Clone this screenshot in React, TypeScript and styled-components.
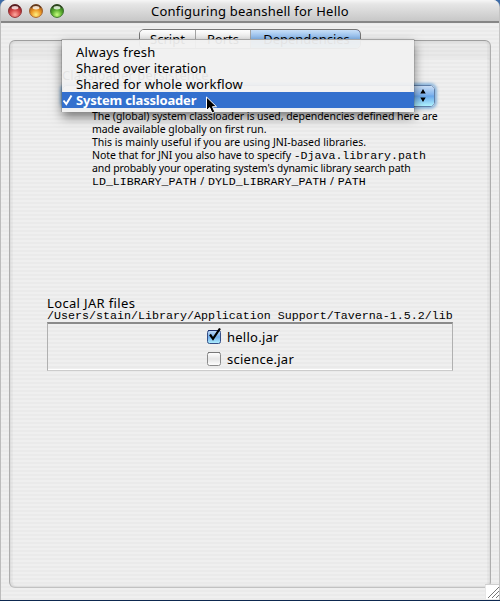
import React from "react";
import styled, { createGlobalStyle, css } from "styled-components";

const GlobalStyle = createGlobalStyle`
  * { box-sizing: border-box; }
  body { margin: 0; overflow: hidden; }
`;

const stripes = css`
  background: repeating-linear-gradient(to bottom, #efefef 0 2px, #eaeaea 2px 4px);
`;

const Desktop = styled.div`
  width: 500px;
  height: 601px;
  background: linear-gradient(to bottom, #3d6ca8 0 580px, #0d2850 580px);
  font-family: "Noto Sans", "Open Sans", sans-serif;
  font-size: 13px;
  color: #000;
  overflow: hidden;
`;

const Window = styled.div`
  position: relative;
  display: flex;
  flex-direction: column;
  height: 600px;
  border-radius: 7px 7px 0 0;
  overflow: hidden;
  ${stripes}
  border-left: 1px solid #bcbcbc;
  border-right: 1px solid #c4c4c4;
`;

const TitleBar = styled.header`
  flex: none;
  display: flex;
  align-items: center;
  height: 23px;
  padding: 0 0 0 8px;
  background: linear-gradient(to bottom, #f6f6f6 0, #e6e6e6 4px, #c7c7c7 21px);
  border-bottom: 2px solid #868686;
  margin: 0 -1px;
`;

const Lights = styled.div`
  display: flex;
  gap: 6px;
`;

const Title = styled.h1`
  flex: 1;
  margin: 0 0 0 86px;
  font-size: 13px;
  font-weight: 400;
  line-height: 20px;
  white-space: nowrap;
`;

const Line = styled.span<{ $ls?: number; $ws?: number }>`
  display: block;
  white-space: pre;
  letter-spacing: ${(p) => p.$ls ?? 0}px;
  word-spacing: ${(p) => p.$ws ?? 0}px;
`;

const Content = styled.main`
  flex: 1;
  display: flex;
  flex-direction: column;
  padding: 6px 8px 12px;
`;

const TabBar = styled.nav`
  position: relative;
  z-index: 1;
  display: flex;
  align-self: flex-start;
  width: 222px;
  height: 20px;
  margin: 0 0 -9px 130px;
  border: 1px solid #777;
  border-radius: 5px;
  overflow: hidden;
`;

const Tab = styled.div<{ $w: number; $active?: boolean }>`
  width: ${(p) => p.$w}px;
  text-align: center;
  line-height: 18px;
  border-right: 1px solid #a4a4a4;
  background: linear-gradient(to bottom, #fff, #e9e9e9 50%, #e2e2e2 51%, #fff);
  ${(p) =>
    p.$active &&
    css`
      border: 1px solid #080870;
      border-width: 1px 1px 0 0;
      margin: -1px -1px 0 0;
      padding-left: 2px;
      border-radius: 0 5px 0 0;
      background: linear-gradient(to bottom, #c9e0f8, #86b6ec 50%, #6ba8e9 51%, #a8e0ff);
    `}
`;

const Panel = styled.section`
  flex: 1;
  display: flex;
  flex-direction: column;
  border: 1px solid #adadad;
  border-top-color: #9e9e9e;
  border-bottom-color: #c2c2c2;
  border-radius: 6px;
  box-shadow: inset 0 0 3px #c8c8c8, inset 0 17px 0 rgba(0, 0, 0, 0.022), inset 3px 0 0 rgba(0, 0, 0, 0.02), inset -3px 0 0 rgba(0, 0, 0, 0.02);
`;

const Persistence = styled.div`
  display: flex;
  flex-direction: column;
  height: 69px;
  padding: 25px 0 0 52px;
  line-height: 18px;
`;

const Combo = styled.div`
  flex: none;
  display: flex;
  justify-content: space-between;
  width: 373px;
  height: 22px;
  margin-top: 1px;
  padding-left: 12px;
  line-height: 20px;
  border: 1px solid #607fa8;
  border-radius: 5px;
  background: linear-gradient(to bottom, #fff, #e6e6e6 50%, #fff);
  box-shadow: 0 0 3px 2px #8ab5dc;
`;

const ComboArrows = styled.span`
  display: flex;
  width: 24px;
  padding-left: 8px;
  border-radius: 0 4px 4px 0;
  background: linear-gradient(to bottom, #c9def6, #7eb2ed 45%, #68a6ea 50%, #aff3ff);
`;

const Notes = styled.div`
  padding-left: 82px;
  font-size: 10.5px;
  line-height: 13px;
`;

const Mono = styled.code<{ $size: number }>`
  font-family: "Liberation Mono", monospace;
  font-size: ${(p) => p.$size}px;
  line-height: 1;
  letter-spacing: 0;
  word-spacing: 0;
`;

const JarSection = styled.div`
  margin: 106px 37px 0 37px;
`;

const JarPath = styled.div`
  height: 12px;
  margin-top: -2px;
  padding-top: 2px;
  display: flex;
  align-items: center;
  line-height: 12px;
  white-space: nowrap;
`;

const JarList = styled.ul`
  height: 49px;
  margin: 0;
  padding: 2px 0 0 158px;
  list-style: none;
  border: 1px solid #b0b0b0;
  border-top: 2px solid #8b8b8b;
  border-bottom: 1px solid #ccc;
  box-shadow: inset 0 -1px 0 #fff;
`;

const JarRow = styled.li`
  display: flex;
  align-items: center;
  gap: 5px;
  height: 22px;
`;

const Menu = styled.div`
  position: absolute;
  z-index: 2;
  left: 61px;
  top: 39px;
  width: 352px;
  height: 73px;
  padding: 4px 0;
  background: rgba(241, 241, 241, 0.94);
  border-top: 1px solid #a5a5a5;
  box-shadow: 0 5px 10px rgba(0, 0, 0, 0.5), -1px 0 0 rgba(0, 0, 0, 0.13), 1px 0 0 rgba(0, 0, 0, 0.1);
`;

const MenuItem = styled.div<{ $selected?: boolean }>`
  display: flex;
  height: 16px;
  line-height: 16px;
  padding-left: 14px;
  ${(p) =>
    p.$selected &&
    css`
      padding-left: 0;
      color: #fff;
      font-weight: 700;
      background: #3370ce;
    `}
`;

const Check = styled.svg`
  width: 14px;
  height: 16px;
  flex: none;
`;

const Pointer = styled.svg`
  position: absolute;
  z-index: 3;
  left: 204px;
  top: 96px;
`;

const ResizeGrip = styled.svg`
  position: absolute;
  right: 0;
  bottom: 1px;
`;

function Light({ id, dark, mid, glow }: { id: string; dark: string; mid: string; glow: string }) {
  return (
    <svg width="15" height="15" viewBox="0 0 15 15">
      <defs>
        <radialGradient id={id} cx="50%" cy="78%" r="75%">
          <stop offset="0" stopColor={glow} />
          <stop offset=".5" stopColor={mid} />
          <stop offset="1" stopColor={dark} />
        </radialGradient>
      </defs>
      <circle cx="7" cy="8.7" r="6.3" fill="#fff" opacity=".6" />
      <circle cx="7" cy="8" r="6.5" fill={`url(#${id})`} stroke={dark} strokeWidth=".8" />
      <path d="M2 4.7A6.2 6.2 0 0 1 12 4.7" fill="none" stroke="#2d2020" strokeWidth="1.6" opacity=".55" />
      <ellipse cx="7" cy="4.7" rx="3.4" ry="1.7" fill="#fff" opacity=".75" />
    </svg>
  );
}

function CheckBox({ checked }: { checked?: boolean }) {
  const id = checked ? "boxOn" : "boxOff";
  return (
    <svg width="16" height="18" viewBox="0 0 16 18">
      <defs>
        <linearGradient id={id} x2="0" y2="1">
          <stop offset="0" stopColor={checked ? "#c4dcf7" : "#ffffff"} />
          <stop offset=".5" stopColor={checked ? "#72adeb" : "#e5e5e5"} />
          <stop offset="1" stopColor={checked ? "#b0f2ff" : "#ffffff"} />
        </linearGradient>
      </defs>
      <rect x="1.5" y="2.5" width="13" height="13" rx="2" fill={`url(#${id})`} stroke={checked ? "#354e86" : "#8b8b8b"} />
      <path d="M2 2.5h12" stroke={checked ? "#20306b" : "#777"} />
      {checked && <path d="M4 6.5 7 10.8 14 .5" fill="none" stroke="#000" strokeWidth="2.2" />}
    </svg>
  );
}

export default function App() {
  return (
    <>
      <GlobalStyle />
      <Desktop>
        <Window>
          <TitleBar>
            <Lights>
              <Light id="red" dark="#7d1b20" mid="#d64a49" glow="#ffaaa0" />
              <Light id="amber" dark="#96501a" mid="#ed9a28" glow="#fff080" />
              <Light id="green" dark="#28601a" mid="#5bad30" glow="#c8ff80" />
            </Lights>
            <Title><Line $ls={0.22}>Configuring beanshell for Hello</Line></Title>
          </TitleBar>
          <Content>
            <TabBar>
              <Tab $w={56}>Script</Tab>
              <Tab $w={55}>Ports</Tab>
              <Tab $w={110} $active>Dependencies</Tab>
            </TabBar>
            <Panel>
              <Persistence>
                <Line $ls={0.12}>Classloader persistence</Line>
                <Combo>
                  <span>System classloader</span>
                  <ComboArrows>
                    <svg width="10" height="20" viewBox="0 0 10 20">
                      <path d="M2.3 7.5 5 3 7.7 7.5ZM2.3 11.5 5 16 7.7 11.5Z" fill="#000" />
                    </svg>
                  </ComboArrows>
                </Combo>
              </Persistence>
              <Notes>
                <Line $ls={-0.05}>The (global) system classloader is used, dependencies defined here are</Line>
                <Line $ls={-0.05}>made available globally on first run.</Line>
                <Line $ls={0.01}>This is mainly useful if you are using JNI-based libraries.</Line>
                <Line $ls={-0.04}>Note that for JNI you also have to specify <Mono $size={11.6}>-Djava.library.path</Mono></Line>
                <Line $ls={-0.11}>and probably your operating system's dynamic library search path</Line>
                <Line $ws={1.1}><Mono $size={11.6}>LD_LIBRARY_PATH</Mono> / <Mono $size={11.6}>DYLD_LIBRARY_PATH</Mono> / <Mono $size={11.6}>PATH</Mono></Line>
              </Notes>
              <JarSection>
                <Line $ls={0.35}>Local JAR files</Line>
                <JarPath><Mono $size={11.67}>/Users/stain/Library/Application Support/Taverna-1.5.2/lib</Mono></JarPath>
                <JarList>
                  <JarRow><CheckBox checked /><Line $ls={0.25}>hello.jar</Line></JarRow>
                  <JarRow><CheckBox /><Line $ls={0.25}>science.jar</Line></JarRow>
                </JarList>
              </JarSection>
            </Panel>
          </Content>
          <Menu>
            <MenuItem><Line $ls={0.25}>Always fresh</Line></MenuItem>
            <MenuItem><Line $ls={0.1}>Shared over iteration</Line></MenuItem>
            <MenuItem><Line $ls={0.13}>Shared for whole workflow</Line></MenuItem>
            <MenuItem $selected>
              <Check viewBox="0 0 14 16">
                <path d="M1.5 8.5 4.3 12 9.5 3.5" fill="none" stroke="#fff" strokeWidth="2" />
              </Check>
              <Line $ls={-0.18}>System classloader</Line>
            </MenuItem>
          </Menu>
          <Pointer width="13" height="19" viewBox="0 0 13 19">
            <path d="M1.5 1v13.5L4.7 11.6 7 17 9.8 15.8 7.5 10.7H11.5Z" fill="#000" stroke="#fff" />
          </Pointer>
          <ResizeGrip width="14" height="15" viewBox="0 0 14 15">
            <path d="M0 0h14v15H0z" fill="#fff" />
            <path d="M0 15V.5H14" fill="none" stroke="#d0d0d0" />
            <path d="M3 14 14 3M7 14 14 7M11 14 14 11" stroke="#777" />
          </ResizeGrip>
        </Window>
      </Desktop>
    </>
  );
}
